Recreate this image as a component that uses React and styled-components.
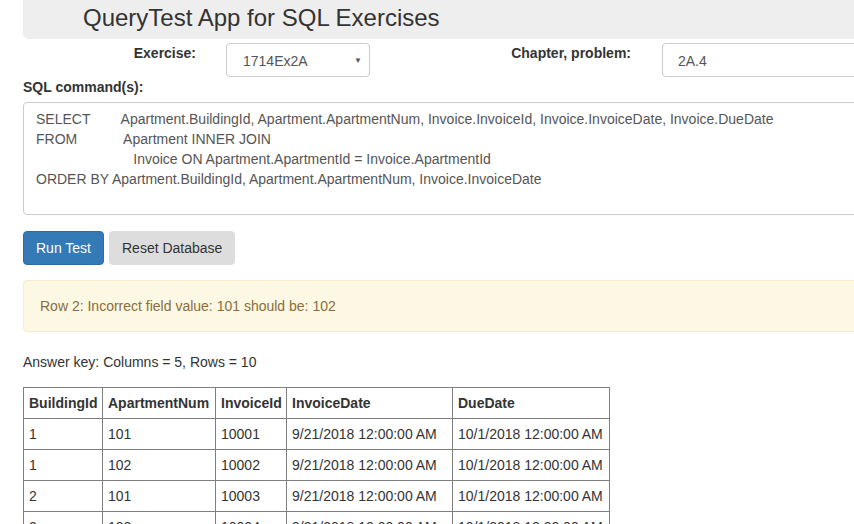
import React from "react";
import styled, { createGlobalStyle } from "styled-components";

const GlobalStyle = createGlobalStyle`
	html, body {
		margin: 0;
		padding: 0;
		background: #fff;
		overflow: hidden;
	}
	body {
		font-family: "Liberation Sans", Arial, sans-serif;
		font-size: 14px;
		line-height: 20px;
		color: #333;
	}
`;

const Page = styled.div`
	width: 1150px;
	padding-left: 23px;
`;

const Header = styled.div`
	background-color: #eee;
	height: 39px;
	border-radius: 0 0 6px 6px;
	padding-left: 60px;
	box-sizing: border-box;
	h2 {
		margin: 0;
		font-size: 24px;
		font-weight: 400;
		line-height: 36px;
		color: #333;
	}
`;

const FormRow = styled.div`
	display: flex;
	align-items: flex-start;
	margin-top: 4px;
`;

const FieldLabel = styled.label`
	display: block;
	width: ${(p) => p.w}px;
	box-sizing: border-box;
	text-align: right;
	padding-right: ${(p) => p.pr}px;
	font-weight: 700;
	line-height: 20px;
`;

const SelectBox = styled.div`
	width: 144px;
	height: 34px;
	box-sizing: border-box;
	border: 1px solid #ccc;
	border-radius: 4px;
	display: flex;
	align-items: center;
	justify-content: space-between;
	padding: 2px 7px 0 16px;
	color: #555;
	font-size: 14px;
	.arrow {
		font-size: 8px;
		color: #555;
	}
`;

const TextInput = styled.div`
	width: 400px;
	height: 34px;
	box-sizing: border-box;
	border: 1px solid #ccc;
	border-radius: 4px;
	display: flex;
	align-items: center;
	padding: 2px 15px 0;
	color: #555;
`;

const SectionLabel = styled.div`
	font-weight: 700;
	margin-bottom: 5px;
`;

const SqlBox = styled.textarea`
	display: block;
	width: 1000px;
	height: 113px;
	box-sizing: border-box;
	border: 1px solid #ccc;
	border-radius: 4px;
	padding: 6px 12px;
	font-family: "Liberation Sans", Arial, sans-serif;
	font-size: 14px;
	line-height: 20px;
	color: #555;
	resize: none;
	white-space: pre;
	overflow: hidden;
	outline: none;
`;

const ButtonRow = styled.div`
	display: flex;
	gap: 5px;
	margin-top: 16px;
`;

const Button = styled.button`
	height: 34px;
	padding: 0 12px;
	border-radius: 4px;
	font-family: "Liberation Sans", Arial, sans-serif;
	font-size: 14px;
	line-height: 20px;
	border: 1px solid ${(p) => (p.primary ? "#2e6da4" : "#ddd")};
	background-color: ${(p) => (p.primary ? "#337ab7" : "#ddd")};
	color: ${(p) => (p.primary ? "#fff" : "#333")};
	cursor: pointer;
`;

const Alert = styled.div`
	margin-top: 15px;
	width: 1000px;
	box-sizing: border-box;
	padding: 15px 16px;
	background-color: #fcf8e3;
	border: 1px solid #faebcc;
	border-radius: 4px;
	color: #8a6d3b;
`;

const KeyText = styled.p`
	margin: 20px 0 15px;
`;

const ResultTable = styled.table`
	border-collapse: collapse;
	table-layout: fixed;
	width: 586px;
	th,
	td {
		border: 1px solid #7f7f7f;
		padding: 5px 2px 5px 5px;
		text-align: left;
		line-height: 20px;
		white-space: nowrap;
		overflow: hidden;
	}
	th {
		font-weight: 700;
	}
`;

const sql = [
	"SELECT        Apartment.BuildingId, Apartment.ApartmentNum, Invoice.InvoiceId, Invoice.InvoiceDate, Invoice.DueDate",
	"FROM            Apartment INNER JOIN",
	"                         Invoice ON Apartment.ApartmentId = Invoice.ApartmentId",
	"ORDER BY Apartment.BuildingId, Apartment.ApartmentNum, Invoice.InvoiceDate",
].join("\n");

const columns = [
	{ name: "BuildingId", width: 79 },
	{ name: "ApartmentNum", width: 113 },
	{ name: "InvoiceId", width: 71 },
	{ name: "InvoiceDate", width: 166 },
	{ name: "DueDate", width: 157 },
];

const rows = [
	["1", "101", "10001", "9/21/2018 12:00:00 AM", "10/1/2018 12:00:00 AM"],
	["1", "102", "10002", "9/21/2018 12:00:00 AM", "10/1/2018 12:00:00 AM"],
	["2", "101", "10003", "9/21/2018 12:00:00 AM", "10/1/2018 12:00:00 AM"],
	["2", "102", "10004", "9/21/2018 12:00:00 AM", "10/1/2018 12:00:00 AM"],
	["3", "101", "10005", "9/21/2018 12:00:00 AM", "10/1/2018 12:00:00 AM"],
];

function App() {
	return (
		<>
			<GlobalStyle />
			<Page>
				<Header>
					<h2>QueryTest App for SQL Exercises</h2>
				</Header>
				<FormRow>
					<FieldLabel w={203} pr={30}>Exercise:</FieldLabel>
					<SelectBox>
						<span>1714Ex2A</span>
						<span className="arrow">▼</span>
					</SelectBox>
					<FieldLabel w={292} pr={31}>Chapter, problem:</FieldLabel>
					<TextInput>2A.4</TextInput>
				</FormRow>
				<SectionLabel>SQL command(s):</SectionLabel>
				<SqlBox readOnly value={sql} />
				<ButtonRow>
					<Button primary>Run Test</Button>
					<Button>Reset Database</Button>
				</ButtonRow>
				<Alert>Row 2: Incorrect field value: 101 should be: 102</Alert>
				<KeyText>Answer key: Columns = 5, Rows = 10</KeyText>
				<ResultTable>
					<colgroup>
						{columns.map((c) => (
							<col key={c.name} style={{ width: c.width }} />
						))}
					</colgroup>
					<thead>
						<tr>
							{columns.map((c) => (
								<th key={c.name}>{c.name}</th>
							))}
						</tr>
					</thead>
					<tbody>
						{rows.map((r, i) => (
							<tr key={i}>
								{r.map((v, j) => (
									<td key={j}>{v}</td>
								))}
							</tr>
						))}
					</tbody>
				</ResultTable>
			</Page>
		</>
	);
}

export default App;
